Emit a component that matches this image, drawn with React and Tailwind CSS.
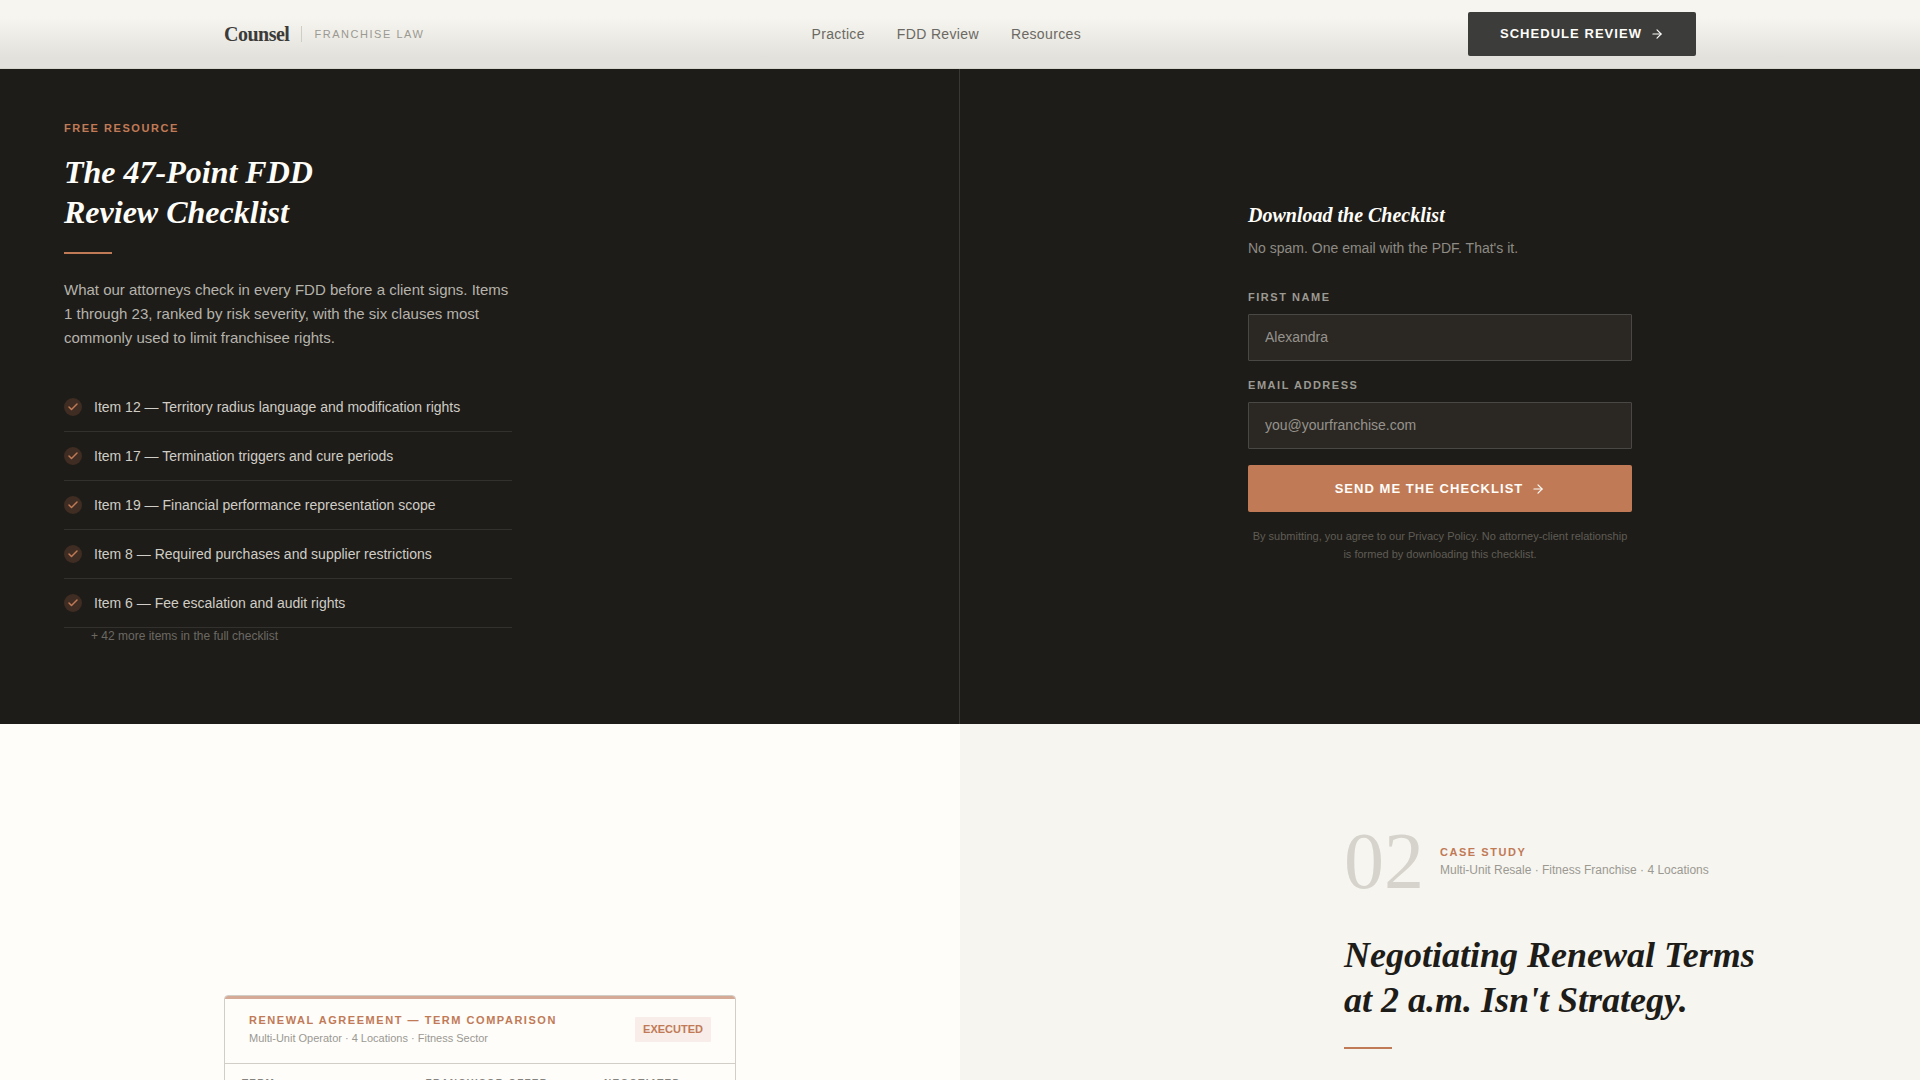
import React from 'react';
import { ArrowRight, Check } from 'lucide-react';

const navLinks = ['Practice', 'FDD Review', 'Resources'];

const checklistItems = [
  'Item 12 — Territory radius language and modification rights',
  'Item 17 — Termination triggers and cure periods',
  'Item 19 — Financial performance representation scope',
  'Item 8 — Required purchases and supplier restrictions',
  'Item 6 — Fee escalation and audit rights',
];

function Header() {
  return (
    <header className="border-b border-[#d6d4cd] bg-linear-to-b from-[#f7f5ef] from-25% to-[#e2e1dc] to-85%">
      <div className="mx-auto flex h-[68px] max-w-[1600px] items-center justify-between px-16">
        <a href="#home" className="flex items-center gap-3">
          <span className="font-['Liberation_Serif',serif] text-xl font-bold tracking-tight text-[#3c3b39]">Counsel</span>
          <span className="h-4 w-px bg-[#cfcdc6]"></span>
          <span className="text-[11px] uppercase tracking-[0.14em] text-[#9b9992]">Franchise Law</span>
        </a>
        <nav className="flex gap-8">
          {navLinks.map((link) => (
            <a key={link} href="#nav" className="text-sm tracking-wide text-[#6b6963]">
              {link}
            </a>
          ))}
        </nav>
        <button
          type="button"
          className="flex h-11 items-center gap-2 rounded-[2px] bg-[#3c3c3b] px-8 text-[13px] font-bold uppercase tracking-[0.08em] text-[#fefdf9]"
        >
          Schedule Review
          <ArrowRight size={14} strokeWidth={2} />
        </button>
      </div>
    </header>
  );
}

function Field({ id, label, type, placeholder }) {
  return (
    <div className="flex flex-col gap-2">
      <label htmlFor={id} className="text-[11px] leading-[17px] font-bold uppercase tracking-[0.14em] text-[#9b9992]">
        {label}
      </label>
      <input
        id={id}
        type={type}
        placeholder={placeholder}
        className="h-[47px] w-full rounded-[1px] border border-[#4a4844] bg-[#2b2824] px-4 pb-0.5 text-sm text-white outline-none placeholder:text-[#96938c]"
      />
    </div>
  );
}

function ChecklistSection() {
  return (
    <section className="grid grid-cols-2 bg-[#1e1c18]">
      <div className="border-r border-[#3a3834] px-16 pt-[51px] pb-20">
        <div className="max-w-md">
          <p className="text-[11px] leading-4 font-bold uppercase tracking-[0.14em] text-[#c17a56]">Free Resource</p>
          <h2 className="mt-4 font-['Liberation_Serif',serif] text-[32px] leading-10 font-bold italic text-[#fefdf9]">
            The 47-Point FDD
            <br />
            Review Checklist
          </h2>
          <div className="mt-5 h-0.5 w-12 bg-[#c17a56]"></div>
          <p className="mt-6 text-[15px] leading-6 text-[#b5b3ac]">
            What our attorneys check in every FDD before a client signs. Items 1 through 23, ranked by risk severity, with the
            six clauses most commonly used to limit franchisee rights.
          </p>
          <ul className="mt-[33px]">
            {checklistItems.map((item) => (
              <li key={item} className="flex h-[49px] items-center gap-3 border-b border-[#33312d] text-sm text-[#cfcdc6]">
                <span className="flex size-[18px] shrink-0 items-center justify-center rounded-full bg-[#3f2c22]">
                  <Check size={12} strokeWidth={3} className="text-[#c17a56]" />
                </span>
                {item}
              </li>
            ))}
          </ul>
          <p className="pl-[27px] text-xs text-[#6b6963]">+ 42 more items in the full checklist</p>
        </div>
      </div>

      <div className="px-16 pt-[132px] pb-20">
        <form className="mx-auto max-w-sm" onSubmit={(e) => e.preventDefault()}>
          <h3 className="font-['Liberation_Serif',serif] text-xl leading-7 font-bold italic text-[#fefdf9]">
            Download the Checklist
          </h3>
          <p className="mt-2 text-sm leading-[22px] text-[#8d8b84]">No spam. One email with the PDF. That's it.</p>
          <div className="mt-[30px] flex flex-col gap-4">
            <Field id="first-name" label="First Name" type="text" placeholder="Alexandra" />
            <Field id="email" label="Email Address" type="email" placeholder="you@yourfranchise.com" />
            <button
              type="submit"
              className="flex h-[47px] items-center justify-center gap-2 rounded-[2px] bg-[#c17a56] text-[13px] font-bold uppercase tracking-[0.08em] text-[#fefdf9]"
            >
              Send Me the Checklist
              <ArrowRight size={14} strokeWidth={2} />
            </button>
          </div>
          <p className="mt-[15px] text-center text-[11px] leading-[18px] text-[#5e5c56]">
            By submitting, you agree to our Privacy Policy. No attorney-client relationship is formed by downloading this
            checklist.
          </p>
        </form>
      </div>
    </section>
  );
}

function TermCard() {
  return (
    <div className="relative mx-auto max-w-lg overflow-hidden rounded-[4px] border border-[#d0cec7] bg-[#fefdfa]">
      <div className="absolute inset-x-0 top-0 h-[3px] bg-[#d5ab98]"></div>
      <div className="flex items-center justify-between border-b border-[#d0cec7] px-6 py-4">
        <div className="flex flex-col gap-px">
          <p className="text-[11px] leading-[17px] font-bold uppercase tracking-[0.14em] text-[#c17a56]">
            Renewal Agreement — Term Comparison
          </p>
          <p className="text-[11px] leading-[17px] text-[#9b9992]">Multi-Unit Operator · 4 Locations · Fitness Sector</p>
        </div>
        <span className="rounded-[1px] bg-[#f8ede8] px-2 py-1 text-[11px] leading-[17px] font-bold uppercase text-[#c17a56]">
          Executed
        </span>
      </div>
      <table className="w-full table-fixed text-left">
        <thead>
          <tr className="text-[10px] leading-4 uppercase tracking-[0.12em] text-[#85837d]">
            <th className="w-[36%] px-[17px] py-3">Term</th>
            <th className="w-[35%] px-[17px] py-3">Franchisor Offer</th>
            <th className="px-[17px] py-3">Negotiated</th>
          </tr>
        </thead>
      </table>
    </div>
  );
}

function CaseStudySection() {
  return (
    <section className="grid grid-cols-2">
      <div className="bg-[#fefdfa] px-16 pt-[271px]">
        <TermCard />
      </div>
      <div className="bg-[#f6f5f0] px-16 pt-[97px] pb-24">
        <div className="ml-auto max-w-lg">
          <div className="flex items-center gap-4">
            <span className="font-['Liberation_Serif',serif] text-[80px] leading-20 text-[#d5d3cb]">02</span>
            <div>
              <p className="text-[11px] leading-[17px] font-bold uppercase tracking-[0.14em] text-[#c17a56]">Case Study</p>
              <p className="text-xs leading-[18px] text-[#9b9992]">Multi-Unit Resale · Fitness Franchise · 4 Locations</p>
            </div>
          </div>
          <h2 className="mt-8 font-['Liberation_Serif',serif] text-4xl leading-[45px] font-bold italic text-[#1e1c18]">
            Negotiating Renewal Terms
            <br />
            at 2 a.m. Isn't Strategy.
          </h2>
          <div className="mt-6 h-0.5 w-12 bg-[#c17a56]"></div>
        </div>
      </div>
    </section>
  );
}

function App() {
  return (
    <div className="flex h-screen flex-col overflow-hidden bg-[#fefdfa] font-['Liberation_Sans',Arial,sans-serif]">
      <Header />
      <main>
        <ChecklistSection />
        <CaseStudySection />
      </main>
    </div>
  );
}

export default App;
